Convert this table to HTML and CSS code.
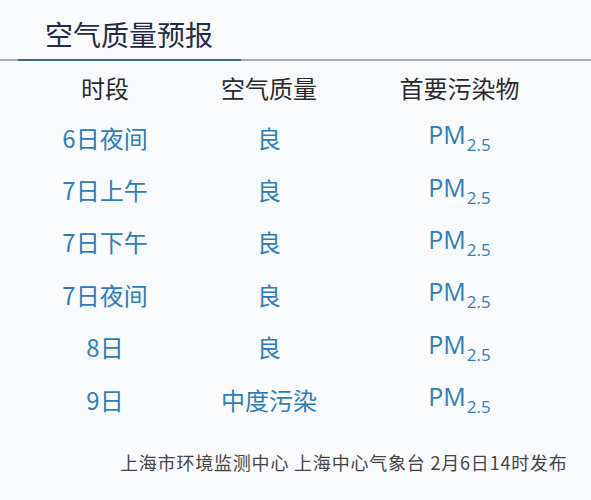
FILE: index.html
```html
<!DOCTYPE html>
<html lang="zh">
<head>
<meta charset="utf-8">
<link rel="stylesheet" href="styles.css">
</head>
<body>
<div class="page">
  <header class="head">
    <h1 class="title">空气质量预报</h1>
    <div class="rule"><span class="rule-accent"></span></div>
  </header>
  <div class="table">
    <div class="th">时段</div><div class="th">空气质量</div><div class="th">首要污染物</div>
    <div class="td">6日夜间</div><div class="td">良</div><div class="td"><span class="pm">PM<sub>2.5</sub></span></div>
    <div class="td">7日上午</div><div class="td">良</div><div class="td"><span class="pm">PM<sub>2.5</sub></span></div>
    <div class="td">7日下午</div><div class="td">良</div><div class="td"><span class="pm">PM<sub>2.5</sub></span></div>
    <div class="td">7日夜间</div><div class="td">良</div><div class="td"><span class="pm">PM<sub>2.5</sub></span></div>
    <div class="td">8日</div><div class="td">良</div><div class="td"><span class="pm">PM<sub>2.5</sub></span></div>
    <div class="td">9日</div><div class="td">中度污染</div><div class="td"><span class="pm">PM<sub>2.5</sub></span></div>
  </div>
  <footer class="foot">上海市环境监测中心 上海中心气象台 2月6日14时发布</footer>
</div>
</body>
</html>
```
FILE: styles.css
```css
html, body {
  margin: 0;
  padding: 0;
  background: #fafbfd;
}
.page {
  width: 591px;
  height: 500px;
  font-family: "Noto Sans CJK SC", "Noto Sans", sans-serif;
  display: flex;
  flex-direction: column;
}
.head {
  padding-top: 14px;
}
.title {
  margin: 0 0 0 45px;
  font-size: 28px;
  font-weight: 400;
  line-height: 40px;
  color: #262b45;
}
.rule {
  margin-top: 5px;
  height: 2px;
  background: #a4adb0;
  display: flex;
}
.rule-accent {
  margin-left: 18px;
  width: 223px;
  background: #3f6f80;
}
.table {
  display: grid;
  grid-template-columns: 210px 118px 263px;
  grid-template-rows: 48px;
  grid-auto-rows: 52.4px;
  margin-top: 2px;
}
.th, .td {
  display: flex;
  align-items: center;
  justify-content: center;
  font-size: 24px;
  white-space: nowrap;
}
.th {
  color: #2b2b2b;
}
.td {
  color: #2f7dbd;
}
.pm {
  font-family: "Open Sans", "Noto Sans", sans-serif;
  font-size: 25px;
  line-height: 30px;
  position: relative;
  top: -3px;
}
.pm sub {
  font-size: 17px;
  vertical-align: -7px;
  line-height: 0;
  margin-left: 1px;
}
.foot {
  margin: 24px 0 0 120px;
  font-size: 18px;
  letter-spacing: 0.8px;
  color: #454545;
  white-space: nowrap;
}
```
